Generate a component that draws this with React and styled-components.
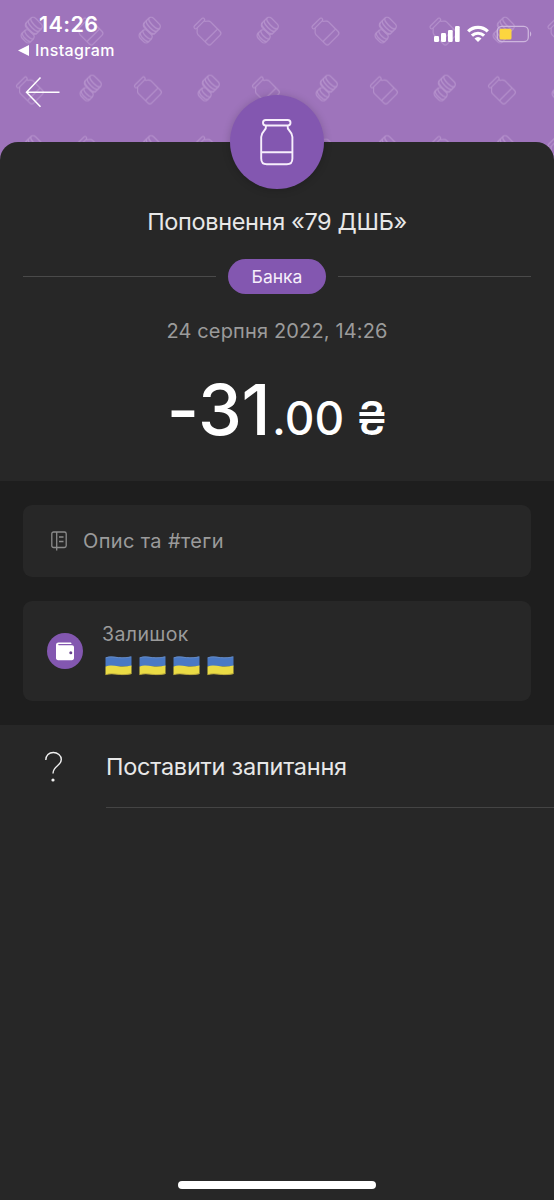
import React from 'react'
import styled, { createGlobalStyle } from 'styled-components'

const color = {
  header: '#9e74bb',
  accent: '#8357b0',
  surface: '#272727',
  band: '#1e1e1e',
  line: '#4a4a4a',
  text: '#e8e8e8',
  muted: '#9b9b9b',
  white: '#fff',
}

const GlobalStyle = createGlobalStyle`
  * {
    box-sizing: border-box;
  }
  body {
    margin: 0;
    background: ${color.surface};
    font-family: Inter, 'Liberation Sans', sans-serif;
  }
`

const Screen = styled.div`
  position: relative;
  width: 554px;
  height: 1200px;
  overflow: hidden;
  display: flex;
  flex-direction: column;
  background: ${color.surface};
`

const Header = styled.header`
  position: relative;
  flex: none;
  height: 170px;
  background: ${color.header};
`

const PatternLayer = styled.svg`
  position: absolute;
  inset: 0;
  width: 100%;
  height: 100%;
`

const StatusBar = styled.div`
  position: relative;
  display: flex;
  justify-content: space-between;
  height: 68px;
  padding: 11px 22px 0 18px;
  color: ${color.white};
`

const Clock = styled.div`
  width: 80px;
  margin-left: 21px;
  font-size: 21.5px;
  font-weight: 600;
  line-height: 26px;
  letter-spacing: 0.4px;
`

const BackToApp = styled.div`
  display: flex;
  align-items: center;
  gap: 6px;
  margin-top: 3px;
  font-size: 16px;
  font-weight: 500;
  line-height: 20px;
  letter-spacing: 0.35px;
`

const StatusIcons = styled.div`
  display: flex;
  align-items: flex-start;
  gap: 7px;
  padding-top: 14px;
`

const BackButton = styled.button`
  position: relative;
  display: block;
  margin: 8px 0 0 25px;
  padding: 0;
  border: none;
  background: none;
  line-height: 0;
`

const Sheet = styled.main`
  position: relative;
  flex: none;
  display: flex;
  flex-direction: column;
  align-items: center;
  height: 339px;
  margin-top: -28px;
  border-radius: 18px 18px 0 0;
  background: ${color.surface};
`

const Avatar = styled.div`
  display: flex;
  flex: none;
  align-items: center;
  justify-content: center;
  width: 94px;
  height: 94px;
  margin-top: -47px;
  border-radius: 50%;
  background: ${color.accent};
  box-shadow: 0 1px 8px rgba(0, 0, 0, 0.2);
`

const Title = styled.h1`
  margin: 18px 0 0;
  color: ${color.text};
  font-size: 23.5px;
  font-weight: 400;
  line-height: 30px;
  letter-spacing: -0.35px;
`

const TagRow = styled.div`
  display: flex;
  align-items: center;
  gap: 12px;
  width: 100%;
  margin-top: 22px;
  padding: 0 23px;
`

const Rule = styled.div`
  flex: 1;
  height: 1px;
  background: ${color.line};
`

const Tag = styled.div`
  width: 98px;
  height: 35px;
  border-radius: 18px;
  background: ${color.accent};
  color: #f6eefb;
  font-size: 17.5px;
  line-height: 36px;
  text-align: center;
`

const DateText = styled.div`
  margin-top: 24px;
  color: ${color.muted};
  font-size: 20px;
  line-height: 26px;
  letter-spacing: 0.15px;
`

const Amount = styled.div`
  margin-top: 23px;
  color: ${color.white};
  font-size: 70px;
  font-weight: 500;
  line-height: 86px;
  letter-spacing: -0.5px;
  white-space: nowrap;
`

const Cents = styled.span`
  margin-left: 2px;
  font-size: 46px;
  letter-spacing: 0;
`

const Band = styled.section`
  flex: none;
  display: flex;
  flex-direction: column;
  gap: 24px;
  height: 244px;
  padding: 24px 23px;
  background: ${color.band};
`

const Panel = styled.div`
  display: flex;
  align-items: center;
  gap: ${props => props.$gap};
  height: ${props => props.$height};
  padding-left: ${props => props.$inset};
  border-radius: 9px;
  background: ${color.surface};
`

const Placeholder = styled.div`
  color: ${color.muted};
  font-size: 20px;
  line-height: 26px;
  letter-spacing: 0.35px;
`

const WalletBadge = styled.div`
  display: flex;
  align-items: center;
  justify-content: center;
  width: 36px;
  height: 36px;
  border-radius: 50%;
  background: ${color.accent};
`

const Balance = styled.div`
  padding-bottom: 5px;
`

const BalanceLabel = styled.div`
  color: ${color.muted};
  font-size: 19.5px;
  line-height: 26px;
  letter-spacing: 0.4px;
`

const Flags = styled.div`
  display: flex;
  gap: 7px;
  margin-top: 9px;
  padding-left: 3px;
`

const MenuItem = styled.div`
  display: flex;
  flex: none;
  height: 83px;
`

const MenuIcon = styled.div`
  width: 106px;
  padding: 26px 0 0 44px;
  line-height: 0;
`

const MenuLabel = styled.div`
  flex: 1;
  border-bottom: 1px solid #444;
  color: ${color.text};
  font-size: 23.5px;
  line-height: 83px;
  letter-spacing: -0.25px;
`

const HomeIndicator = styled.div`
  width: 198px;
  height: 8px;
  margin: auto auto 11px;
  border-radius: 4px;
  background: ${color.white};
`

const TileJar = ({ x, y }) => (
  <g transform={`translate(${x} ${y}) rotate(-45) scale(0.86)`}>
    <rect x="-8" y="-14.5" width="16" height="3.8" rx="1.9" />
    <path d="M-6-10.7c0 2.300-4.400 2.600-4.400 6V11c0 2 1.200 3.200 3.200 3.200H7.200c2 0 3.200-1.200 3.200-3.200V-4.700c0-3.400-4.400-3.700-4.400-6M-10.400 7H10.400" />
  </g>
)

const TileCoins = ({ x, y }) => (
  <g transform={`translate(${x} ${y}) rotate(45)`}>
    <rect x="-8.5" y="-11.5" width="15" height="13" rx="3.5" />
    <path d="M-8.5-8.5c1 3.500 14 3.500 15 0M-8.500-5c1 3.500 14 3.500 15 0M-8.500-1.500c1 3.500 14 3.500 15 0" />
    <rect x="-4" y="1.5" width="12" height="10.5" rx="3.5" />
    <path d="M-4 4.500c1 2.800 11 2.800 12 0M-4 8c1 2.800 11 2.800 12 0" />
  </g>
)

const HeaderPattern = () => (
  <PatternLayer aria-hidden="true">
    <defs>
      <pattern id="jars" width="118" height="118.5" patternUnits="userSpaceOnUse">
        <g fill="none" stroke="#b996cf" strokeWidth="1.3" opacity="0.8">
          <TileCoins x={31} y={30} />
          <TileJar x={89} y={31} />
          <TileJar x={29.5} y={90} />
          <TileCoins x={90} y={88} />
        </g>
      </pattern>
    </defs>
    <rect width="100%" height="100%" fill="url(#jars)" />
  </PatternLayer>
)

const SignalIcon = () => (
  <svg width="26" height="18" fill="#fff">
    <rect x="0" y="11" width="5" height="6" rx="1.3" />
    <rect x="7" y="8" width="5" height="9" rx="1.3" />
    <rect x="14" y="5" width="4.7" height="12" rx="1.3" />
    <rect x="21" y="1" width="4.7" height="16" rx="1.3" />
  </svg>
)

const WifiIcon = () => (
  <svg width="22" height="17" viewBox="0 0 22 17" fill="none" stroke="#fff" strokeWidth="3.2">
    <path d="M1.2 6.300a14 14 0 0 1 19.600 0" />
    <path d="M4.900 10.700a8.800 8.800 0 0 1 12.200 0" />
    <path d="M11 17 7.500 13.400a4.800 4.800 0 0 1 7 0z" fill="#fff" stroke="none" />
  </svg>
)

const BatteryIcon = () => (
  <svg width="36" height="18" fill="none">
    <rect x="1.3" y="1.3" width="31" height="15.4" rx="4.5" stroke="#cdb5dd" strokeWidth="1.3" />
    <path d="M34 6.500c1.600.5 1.600 4.500 0 5z" fill="#cdb5dd" />
    <rect x="3.5" y="3.7" width="12" height="10.7" rx="1.5" fill="#fcd53f" />
  </svg>
)

const JarIcon = () => (
  <svg width="36" height="48" viewBox="0 0 36 48" fill="none" stroke="#f7eefc" strokeWidth="1.9">
    <rect x="4" y="2" width="27.5" height="5.5" rx="2.75" />
    <path d="M7 7.700c1 5.400-4.800 5-4.800 11.300v21.500c0 3.600 2 5.800 5.600 5.800h20c3.600 0 5.600-2.200 5.600-5.800V19c0-6.300-5.800-5.900-4.800-11.300M2.200 34.200h31.200" />
  </svg>
)

const NoteIcon = () => (
  <svg width="16" height="20" fill="none" stroke="#8c8c8c" strokeWidth="1.3">
    <rect x=".8" y="1" width="14.4" height="15.5" rx="1.8" />
    <path d="M5.700 1v18.500M8 6h4.500M8 10.500h4.500" />
  </svg>
)

const WalletIcon = () => (
  <svg width="18" height="19">
    <path d="M2.500.5H14c1 0 1.500.5 1.500 1.400H2.800c-.8 0-.8 1.300 0 1.300H16c1.200 0 2 .8 2 2V16c0 1.400-.8 2.200-2.200 2.200H2.200C.8 18.200 0 17.400 0 16V3C0 1.500.8.5 2.500.5z" fill="#fff" />
    <circle cx="14.8" cy="10.8" r="1.5" fill="#69438f" />
  </svg>
)

const FlagIcon = () => (
  <svg width="27" height="20" viewBox="0 0 27 20" role="img" aria-label="Україна">
    <path d="M.5 1.600C5-.2 9 .9 13.500 1.300S22.500 1.300 26.500.4v10H.5z" fill="#4a79c4" />
    <path d="M.5 10.400c4.500-1.600 8.500-.6 13-.2s9 .2 13-.8v8.500c-4 1.100-8.500 1.300-13 .8s-8.500-1.200-13 .4z" fill="#eadb45" />
    <path d="M.8 18.700c4.300-1.500 8.200-.7 12.700-.3s9 .3 12.700-.8" fill="none" stroke="#a9983a" strokeWidth=".8" />
    <path d="M.8 1.800c4.300-1.700 8.200-.6 12.700-.2s9 .1 12.700-.8" fill="none" stroke="#6c8fc4" strokeWidth=".8" />
  </svg>
)

const App = () => {
  return (
    <>
      <GlobalStyle />
      <Screen>
        <Header>
          <HeaderPattern />
          <StatusBar>
            <div>
              <Clock>14:26</Clock>
              <BackToApp>
                <svg width="11" height="11">
                  <path d="M0 5.500 11 0v11z" fill="#fff" />
                </svg>
                Instagram
              </BackToApp>
            </div>
            <StatusIcons>
              <SignalIcon />
              <WifiIcon />
              <BatteryIcon />
            </StatusIcons>
          </StatusBar>
          <BackButton aria-label="Назад">
            <svg width="35" height="32" fill="none" stroke="#fff" strokeWidth="1.5">
              <path d="M34.500 16.300H1.500M15.500 1.500 1.500 16.300l14 14.500" />
            </svg>
          </BackButton>
        </Header>

        <Sheet>
          <Avatar>
            <JarIcon />
          </Avatar>
          <Title>Поповнення «79 ДШБ»</Title>
          <TagRow>
            <Rule />
            <Tag>Банка</Tag>
            <Rule />
          </TagRow>
          <DateText>24 серпня 2022, 14:26</DateText>
          <Amount>
            -31<Cents>.00 ₴</Cents>
          </Amount>
        </Sheet>

        <Band>
          <Panel $height="72px" $inset="28px" $gap="16px">
            <NoteIcon />
            <Placeholder>Опис та #теги</Placeholder>
          </Panel>
          <Panel $height="100px" $inset="24px" $gap="19px">
            <WalletBadge>
              <WalletIcon />
            </WalletBadge>
            <Balance>
              <BalanceLabel>Залишок</BalanceLabel>
              <Flags>
                {[1, 2, 3, 4].map(item => (
                  <FlagIcon key={item} />
                ))}
              </Flags>
            </Balance>
          </Panel>
        </Band>

        <MenuItem>
          <MenuIcon>
            <svg width="20" height="32" fill="none" stroke="#f0f0f0" strokeWidth="1.4">
              <path d="M1.800 9C1.800 4.300 5 1.500 9.300 1.500s8 2.800 8 7c0 6.500-8.300 6-8.300 14" />
              <circle cx="9" cy="29" r="1.6" fill="#f0f0f0" stroke="none" />
            </svg>
          </MenuIcon>
          <MenuLabel>Поставити запитання</MenuLabel>
        </MenuItem>

        <HomeIndicator />
      </Screen>
    </>
  )
}

export default App
